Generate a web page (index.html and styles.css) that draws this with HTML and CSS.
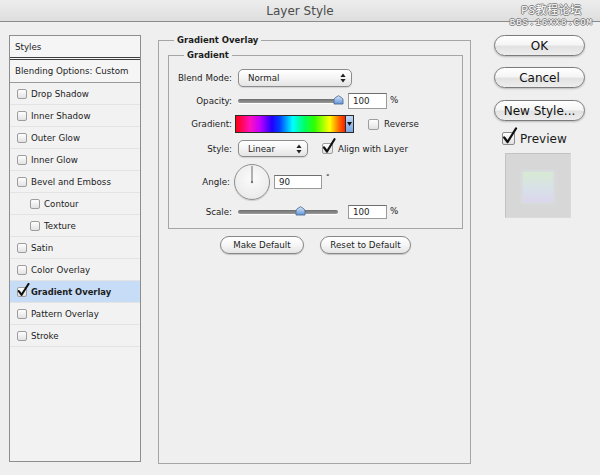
FILE: index.html
```html
<!DOCTYPE html>
<html>
<head>
<meta charset="utf-8">
<title>Layer Style</title>
<link rel="stylesheet" href="styles.css">
</head>
<body>
<div class="window">
  <div class="titlebar">
    <span class="title">Layer Style</span>
    <div class="watermark">
      <div class="wm1">PS教程论坛</div>
      <div class="wm2">BBS.16XX8.COM</div>
    </div>
  </div>
  <div class="main">
    <div class="styles-panel">
      <div class="sp-head">Styles</div>
      <div class="sp-blend">Blending Options: Custom</div>
      <div class="sp-item"><span class="cb"></span>Drop Shadow</div>
      <div class="sp-item"><span class="cb"></span>Inner Shadow</div>
      <div class="sp-item"><span class="cb"></span>Outer Glow</div>
      <div class="sp-item"><span class="cb"></span>Inner Glow</div>
      <div class="sp-item"><span class="cb"></span>Bevel and Emboss</div>
      <div class="sp-item sub"><span class="cb"></span>Contour</div>
      <div class="sp-item sub"><span class="cb"></span>Texture</div>
      <div class="sp-item"><span class="cb"></span>Satin</div>
      <div class="sp-item"><span class="cb"></span>Color Overlay</div>
      <div class="sp-item active"><span class="cb"><svg class="chk" width="13" height="14" viewBox="0 0 13 14"><path d="M1.8 8.2 L4.6 11.8 L11.5 1" fill="none" stroke="#111" stroke-width="2.1" stroke-linecap="round" stroke-linejoin="round"/></svg></span>Gradient Overlay</div>
      <div class="sp-item"><span class="cb"></span>Pattern Overlay</div>
      <div class="sp-item"><span class="cb"></span>Stroke</div>
    </div>

    <div class="middle">
      <fieldset class="outer">
        <legend>Gradient Overlay</legend>
        <fieldset class="inner">
          <legend>Gradient</legend>

          <div class="row r-blend">
            <span class="lbl">Blend Mode:</span>
            <div class="select sel-blend"><span>Normal</span>
              <svg width="6" height="10" viewBox="0 0 6 10"><path d="M3 0.6 L5.6 3.9 H0.4Z M3 9.4 L5.6 6.1 H0.4Z" fill="#222"/></svg>
            </div>
          </div>

          <div class="row r-opacity">
            <span class="lbl">Opacity:</span>
            <div class="slider sl-opacity">
              <div class="track"></div>
              <svg class="thumb th-opacity" width="11" height="10" viewBox="0 0 11 10"><defs><linearGradient id="tg1" x1="0" y1="0" x2="0" y2="1"><stop offset="0" stop-color="#d9e9fb"/><stop offset="1" stop-color="#5f95d8"/></linearGradient></defs><path d="M1 9 V5 Q1 3.6 2.2 2.8 L5.5 0.7 L8.8 2.8 Q10 3.6 10 5 V9 Z" fill="url(#tg1)" stroke="#4f6d94" stroke-width="0.9"/></svg>
            </div>
            <div class="num n-opacity">100</div>
            <span class="pct">%</span>
          </div>

          <div class="row r-grad">
            <span class="lbl">Gradient:</span>
            <div class="grad">
              <div class="grad-fill"></div>
              <div class="grad-drop"><svg width="5" height="4" viewBox="0 0 5 4"><path d="M0 0 H5 L2.5 4Z" fill="#111"/></svg></div>
            </div>
            <span class="cb cb-md rev"></span>
            <span class="cb-text">Reverse</span>
          </div>

          <div class="row r-style">
            <span class="lbl">Style:</span>
            <div class="select sel-style"><span>Linear</span>
              <svg width="6" height="10" viewBox="0 0 6 10"><path d="M3 0.6 L5.6 3.9 H0.4Z M3 9.4 L5.6 6.1 H0.4Z" fill="#222"/></svg>
            </div>
            <span class="cb cb-md align"><svg class="chk chk-md" width="14" height="16" viewBox="0 0 14 16"><path d="M2 9.5 L5 13.5 L12.5 1.2" fill="none" stroke="#111" stroke-width="2.2" stroke-linecap="round" stroke-linejoin="round"/></svg></span>
            <span class="cb-text">Align with Layer</span>
          </div>

          <div class="row r-angle">
            <span class="lbl lbl-angle">Angle:</span>
            <div class="dial">
              <svg width="36" height="36" viewBox="0 0 36 36"><line x1="18" y1="18" x2="18" y2="2" stroke="#6a6a6a" stroke-width="1"/><circle cx="18" cy="18" r="1.2" fill="#777"/></svg>
            </div>
            <div class="num n-angle">90</div>
            <span class="deg">°</span>
          </div>

          <div class="row r-scale">
            <span class="lbl">Scale:</span>
            <div class="slider sl-scale">
              <div class="track"></div>
              <svg class="thumb th-scale" width="11" height="10" viewBox="0 0 11 10"><defs><linearGradient id="tg2" x1="0" y1="0" x2="0" y2="1"><stop offset="0" stop-color="#d9e9fb"/><stop offset="1" stop-color="#5f95d8"/></linearGradient></defs><path d="M1 9 V5 Q1 3.6 2.2 2.8 L5.5 0.7 L8.8 2.8 Q10 3.6 10 5 V9 Z" fill="url(#tg2)" stroke="#4f6d94" stroke-width="0.9"/></svg>
            </div>
            <div class="num n-scale">100</div>
            <span class="pct">%</span>
          </div>
        </fieldset>

        <div class="defaults">
          <div class="pill pill-make">Make Default</div>
          <div class="pill pill-reset">Reset to Default</div>
        </div>
      </fieldset>
    </div>

    <div class="right">
      <div class="bigbtn">OK</div>
      <div class="bigbtn b-cancel">Cancel</div>
      <div class="bigbtn b-new">New Style...</div>
      <div class="preview-row">
        <span class="cb cb-lg"><svg class="chk chk-lg" width="16" height="18" viewBox="0 0 16 18"><path d="M2.2 10.5 L5.6 15 L14 1.5" fill="none" stroke="#111" stroke-width="2.3" stroke-linecap="round" stroke-linejoin="round"/></svg></span>
        <span class="preview-text">Preview</span>
      </div>
      <div class="swatch"><div class="swatch-inner"></div></div>
    </div>
  </div>
</div>
</body>
</html>
```

FILE: styles.css
```css
html, body {
  margin: 0;
  padding: 0;
}
body {
  background: #eeeeee;
  font-family: "DejaVu Sans", "Noto Sans CJK SC", sans-serif;
  font-size: 8.7px;
  color: #1c1c1c;
}
.window {
  width: 600px;
  height: 475px;
  background: #efefef;
  overflow: hidden;
}

/* title bar */
.titlebar {
  height: 21px;
  border-bottom: 1px solid #8c8c8c;
  background: linear-gradient(#ededed, #dedede);
  display: flex;
  align-items: center;
  justify-content: center;
  position: relative;
}
.title {
  font-size: 12px;
  color: #4c4c4c;
  margin-top: 1px;
}
.watermark {
  position: absolute;
  right: 7px;
  top: 1px;
  display: flex;
  flex-direction: column;
  align-items: center;
  gap: 1px;
  color: #ffffff;
  text-shadow: 1px 0 0 #808080, -1px 0 0 #808080, 0 1px 0 #808080, 0 -1px 0 #808080;
}
.wm1 {
  font-family: "Noto Sans CJK SC", sans-serif;
  font-size: 11px;
  line-height: 16px;
  letter-spacing: 0.6px;
}
.wm2 {
  font-family: "Liberation Mono", monospace;
  font-size: 9px;
  line-height: 10px;
  letter-spacing: 1px;
}

.main {
  display: flex;
  align-items: flex-start;
  padding-top: 12px;
}

/* styles list */
.styles-panel {
  margin: 1px 0 0 9px;
  width: 132px;
  height: 427px;
  box-sizing: border-box;
  border: 1px solid #8e8e8e;
  background: #f2f2f2;
  flex: none;
}
.sp-head {
  height: 21px;
  line-height: 22px;
  padding-left: 5px;
  border-bottom: 3px double #3e3e3e;
  background: #f5f5f5;
}
.sp-blend {
  height: 22px;
  line-height: 22px;
  padding-left: 5px;
  border-bottom: 1px solid #9a9a9a;
  background: #f5f5f5;
}
.sp-item {
  height: 21px;
  border-bottom: 1px solid #e3e3e3;
  display: flex;
  align-items: center;
  padding-left: 7px;
}
.sp-item.sub {
  padding-left: 20px;
}
.sp-item.active {
  background: #c7dcf6;
  font-weight: bold;
  font-size: 8.4px;
}

/* checkboxes */
.cb {
  width: 10px;
  height: 10px;
  box-sizing: border-box;
  border: 1px solid #9d9d9d;
  border-radius: 2px;
  background: linear-gradient(#fefefe, #e2e2e2);
  margin-right: 4px;
  position: relative;
  flex: none;
}
.chk {
  position: absolute;
  left: -1px;
  top: -5px;
}
.cb-md {
  width: 11px;
  height: 11px;
}
.chk-md {
  left: -1px;
  top: -6px;
}
.cb-lg {
  width: 13px;
  height: 13px;
  margin-left: 8px;
  margin-right: 5px;
  border-color: #8a8a8a;
}
.chk-lg {
  left: -1px;
  top: -6px;
}
.cb-text {
  margin-left: 5px;
}

/* middle panel */
.middle {
  margin-left: 17px;
  width: 313px;
  flex: none;
}
fieldset {
  margin: 0;
  min-width: 0;
}
legend {
  padding: 0 3px;
  font-weight: bold;
  font-size: 8.5px;
  line-height: 12px;
}
.outer {
  box-sizing: border-box;
  height: 430px;
  border: 1px solid #a5a5a5;
  padding: 3px 7px 0 9px;
}
.outer > legend {
  margin-left: 6px;
}
.inner {
  border: 1px solid #a5a5a5;
  padding: 8px 0 9px 0;
}
.inner > legend {
  margin-left: 15px;
}

.row {
  display: flex;
  align-items: center;
}
.lbl {
  width: 63px;
  text-align: right;
  flex: none;
}
.lbl-angle {
  padding-right: 2px;
  width: 61px;
}

.select {
  margin-left: 6px;
  box-sizing: border-box;
  border: 1px solid #8c8c8c;
  border-radius: 5px;
  background: linear-gradient(#ffffff, #f4f4f4 50%, #e4e4e4);
  display: flex;
  align-items: center;
  justify-content: space-between;
  padding: 0 5px 0 9px;
  box-shadow: 0 1px 1px rgba(0, 0, 0, 0.12);
}
.r-blend {
  height: 18px;
}
.sel-blend {
  width: 114px;
  height: 18px;
}

.r-opacity {
  margin-top: 6px;
  height: 16px;
}
.slider {
  margin-left: 6px;
  position: relative;
  height: 16px;
  display: flex;
  align-items: center;
}
.sl-opacity {
  width: 105px;
}
.sl-scale {
  width: 100px;
  height: 14px;
}
.track {
  width: 100%;
  height: 4px;
  border-radius: 2px;
  background: linear-gradient(#6e6e6e, #9a9a9a);
  box-shadow: 0 1px 0 #ffffff;
}
.thumb {
  position: absolute;
  top: 2px;
}
.th-opacity {
  left: 95px;
}
.sl-scale .thumb {
  top: 1px;
}
.th-scale {
  left: 57px;
}

.num {
  box-sizing: border-box;
  background: #ffffff;
  border: 1px solid #9a9a9a;
  border-top-color: #6f6f6f;
  padding-left: 4px;
}
.n-opacity {
  width: 39px;
  height: 16px;
  line-height: 14px;
  margin-left: 5px;
}
.pct {
  margin-left: 3px;
  margin-top: -2px;
}

.r-grad {
  margin-top: 6px;
  height: 18px;
}
.grad {
  margin-left: 3px;
  width: 119px;
  height: 18px;
  box-sizing: border-box;
  border: 1px solid #2a2a2a;
  display: flex;
}
.grad-fill {
  flex: 1;
  background: linear-gradient(to right, #ff0010 0%, #ff10c0 13%, #c000ff 22%, #2000ff 33%, #0040ff 40%, #00ffff 52%, #00ff60 63%, #30ff00 72%, #ffff00 86%, #ff7000 94%, #ff2000 100%);
}
.grad-drop {
  width: 7px;
  background: linear-gradient(#c0d8f6, #7aa7e4);
  border-left: 1px solid #2a2a2a;
  display: flex;
  align-items: center;
  justify-content: center;
}
.rev {
  margin-left: 14px;
  margin-right: 0;
}

.r-style {
  margin-top: 7px;
  height: 17px;
}
.sel-style {
  width: 70px;
  height: 17px;
}
.align {
  margin-left: 14px;
  margin-right: 0;
}

.r-angle {
  margin-top: 7px;
  height: 36px;
}
.dial {
  margin-left: 2px;
  width: 36px;
  height: 36px;
  box-sizing: border-box;
  border: 1px solid #8e8e8e;
  border-radius: 50%;
  background: radial-gradient(circle at 50% 40%, #fbfbfb, #ececec 70%, #dcdcdc);
  box-shadow: 0 1px 1px rgba(0, 0, 0, 0.15);
  display: flex;
  align-items: center;
  justify-content: center;
  flex: none;
}
.dial svg {
  margin: -1px;
}
.n-angle {
  width: 48px;
  height: 14px;
  line-height: 12px;
  margin-left: 4px;
}
.deg {
  align-self: flex-start;
  margin-top: 9px;
  margin-left: 4px;
  font-size: 7px;
}

.r-scale {
  margin-top: 5px;
  height: 14px;
}
.n-scale {
  width: 39px;
  height: 14px;
  line-height: 12px;
  margin-left: 10px;
}

.defaults {
  display: flex;
  justify-content: center;
  gap: 16px;
  margin-top: 7px;
}
.pill {
  height: 18px;
  box-sizing: border-box;
  border: 1px solid #878787;
  border-radius: 9px;
  background: linear-gradient(#ffffff, #f6f6f6 50%, #e4e4e4);
  box-shadow: 0 1px 1px rgba(0, 0, 0, 0.18);
  display: flex;
  align-items: center;
  justify-content: center;
}
.pill-make {
  width: 84px;
}
.pill-reset {
  width: 91px;
}

/* right column */
.right {
  margin-left: 23px;
  margin-top: 1px;
  width: 91px;
  display: flex;
  flex-direction: column;
  flex: none;
}
.bigbtn {
  height: 21px;
  box-sizing: border-box;
  border: 1px solid #7c7c7c;
  border-radius: 11px;
  background: linear-gradient(#ffffff, #f5f5f5 45%, #e2e2e2 55%, #ededed);
  box-shadow: 0 1px 2px rgba(0, 0, 0, 0.22);
  font-size: 12px;
  color: #111;
  display: flex;
  align-items: center;
  justify-content: center;
}
.b-cancel {
  margin-top: 11px;
}
.b-new {
  margin-top: 12px;
}
.preview-row {
  margin-top: 11px;
  height: 13px;
  display: flex;
  align-items: center;
}
.preview-text {
  font-size: 12px;
}
.swatch {
  margin-top: 8px;
  margin-left: 11px;
  width: 66px;
  height: 65px;
  box-sizing: border-box;
  background: #d7d7d7;
  border: 1px solid #c3c3c3;
  border-right-color: #dadada;
  border-bottom-color: #dadada;
  display: flex;
  align-items: center;
  justify-content: center;
}
.swatch-inner {
  width: 30px;
  height: 30px;
  margin-top: 2px;
  background: linear-gradient(#d7ead2, #d8e1e8 55%, #dcd6ec);
  box-shadow: 0 0 3px 2px #d9dde0;
}
```
